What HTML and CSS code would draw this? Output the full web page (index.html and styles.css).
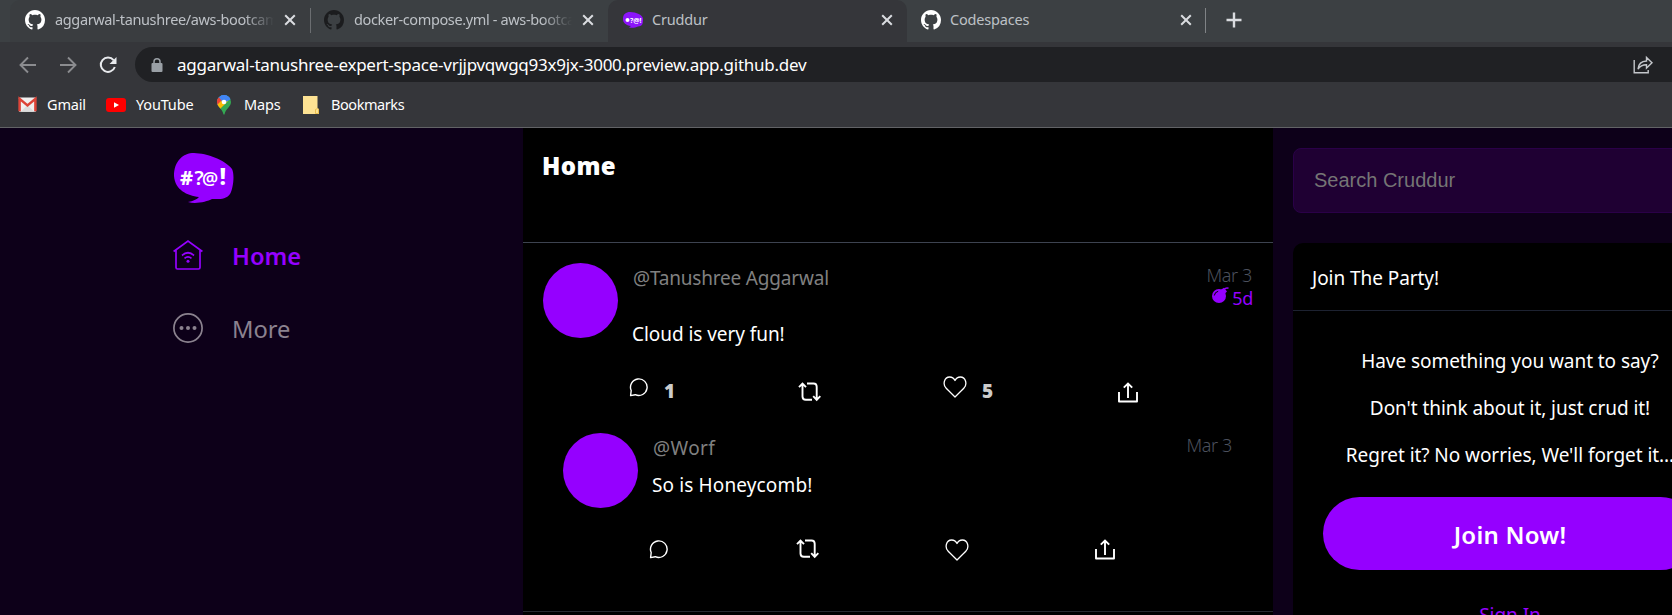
FILE: index.html
```
<!DOCTYPE html>
<html lang="en">
<head>
<meta charset="utf-8">
<title>Cruddur</title>
<link rel="stylesheet" href="styles.css">
</head>
<body>
<svg width="0" height="0" class="defs">
  <symbol id="github" viewBox="0 0 16 16"><path d="M8 0C3.58 0 0 3.58 0 8c0 3.54 2.29 6.53 5.47 7.59.4.07.55-.17.55-.38 0-.19-.01-.82-.01-1.49-2.01.37-2.53-.49-2.69-.94-.09-.23-.48-.94-.82-1.13-.28-.15-.68-.52-.01-.53.63-.01 1.08.58 1.23.82.72 1.21 1.87.87 2.33.66.07-.52.28-.87.51-1.07-1.78-.2-3.64-.89-3.64-3.95 0-.87.31-1.59.82-2.15-.08-.2-.36-1.02.08-2.12 0 0 .67-.21 2.2.82.64-.18 1.32-.27 2-.27s1.36.09 2 .27c1.53-1.04 2.2-.82 2.2-.82.44 1.1.16 1.92.08 2.12.51.56.82 1.27.82 2.15 0 3.07-1.87 3.75-3.65 3.95.29.25.54.73.54 1.48 0 1.07-.01 1.93-.01 2.2 0 .21.15.46.55.38A8.01 8.01 0 0 0 16 8c0-4.42-3.58-8-8-8z"/></symbol>
  <symbol id="close" viewBox="0 0 12 12"><path d="M1.2 1.2l9.6 9.6M10.8 1.2L1.2 10.800" fill="none" stroke="#dadce0" stroke-width="2"/></symbol>
  <symbol id="bubble" viewBox="0 0 60 50"><path d="M20 0C33 .3 51 7 58 16C61 22 59 36 56 41C52 47 44 46 38 46C33 48.500 22 51.500 14 49C19 48 23 46.500 25 44C13 42.500 1 37 0 23C0 8 9 0 20 0z" fill="#9500ff"/></symbol>
  <symbol id="reply" viewBox="0 0 20 20"><path d="M1.600 18.600L2.200 13.500A8.300 8.300 0 1 1 6.300 17.700z" fill="none" stroke="#fff" stroke-width="1.400" stroke-linejoin="round"/></symbol>
  <symbol id="repost" viewBox="0 0 24 20"><path d="M1 5.200L4.500 1.600L8 5.200M4.500 2V14.500Q4.500 17.800 7.800 17.800H14M9 1.500H15.500Q18.700 1.500 18.700 4.800V17M15.200 14.200L18.700 17.800L22.300 14.200" fill="none" stroke="#fff" stroke-width="1.900"/></symbol>
  <symbol id="heart" viewBox="0 0 24 22"><path d="M12 21L3.200 12.300C-.5 8.500 1 1 6.700 1C9.500 1 11 2.500 12 4.500C13 2.500 14.500 1 17.300 1C23 1 24.500 8.500 20.800 12.300z" fill="none" stroke="#fff" stroke-width="1.300" stroke-linejoin="round"/></symbol>
  <symbol id="share" viewBox="0 0 20 21"><path d="M1 10V19.500H19V10" fill="none" stroke="#fff" stroke-width="1.900" stroke-linejoin="round"/><path d="M10 16V2M5.800 5.700L10 1.500L14.200 5.700" fill="none" stroke="#fff" stroke-width="1.900"/></symbol>
</svg>

<header class="browser">
  <div class="tabs">
    <div class="tab tab-first">
      <svg class="fav light"><use href="#github"/></svg>
      <span class="tab-title fade">aggarwal-tanushree/aws-bootcamp</span>
      <svg class="close"><use href="#close"/></svg>
    </div>
    <div class="tab tab-second">
      <svg class="fav dark"><use href="#github"/></svg>
      <span class="tab-title fade">docker-compose.yml - aws-bootcamp</span>
      <svg class="close"><use href="#close"/></svg>
    </div>
    <div class="tab tab-active">
      <svg class="fav" viewBox="0 0 20 20"><path d="M7 2C13 2 20 5 20 9C20 15 19 16 15 16.500C12 18 9 18 6 17.500L8 16C3 15.500 0 13 0 9C0 4 3 2 7 2z" fill="#8c14fb"/><circle cx="4.500" cy="10" r="2" fill="#fff"/><text x="7" y="13" class="fav-text">?@!</text></svg>
      <span class="tab-title">Cruddur</span>
      <svg class="close"><use href="#close"/></svg>
    </div>
    <div class="tab tab-last">
      <svg class="fav light"><use href="#github"/></svg>
      <span class="tab-title">Codespaces</span>
      <svg class="close"><use href="#close"/></svg>
    </div>
    <svg class="plus" viewBox="0 0 16 16"><path d="M8 .5v15M.5 8h15" stroke="#dadce0" stroke-width="2.400"/></svg>
  </div>
  <div class="toolbar">
    <svg class="nav-icon" viewBox="0 0 18 18"><path d="M17 9H2M9 1.500L1.500 9L9 16.500" class="arrow"/></svg>
    <svg class="nav-icon" viewBox="0 0 18 18"><path d="M1 9H16M9 1.500L16.500 9L9 16.500" class="arrow"/></svg>
    <svg class="nav-icon" viewBox="0 0 18 18"><path d="M14.600 4.200A7.200 7.200 0 1 0 15.800 11" fill="none" stroke="#e8eaed" stroke-width="2"/><path d="M17.500 1V8H10.500z" fill="#e8eaed"/></svg>
    <div class="omnibox">
      <svg class="lock" viewBox="0 0 12 14"><rect x="0.500" y="5" width="11" height="9" rx="1" fill="#9aa0a6"/><path d="M3 5.500V3.800a3 3 0 0 1 6 0V5.500" fill="none" stroke="#9aa0a6" stroke-width="1.500"/></svg>
      <span class="url">aggarwal-tanushree-expert-space-vrjjpvqwgq93x9jx-3000.preview.app.github.dev</span>
      <svg class="share-page" viewBox="0 0 20 18"><path d="M1.200 4V16.800H15.200V14M5 13C5.500 8 8 5.200 13.500 5V1.500L19 6.700L13.500 12V8.800C9.500 8.800 7 10 5 13z" fill="none" stroke="#c4c7cb" stroke-width="1.400"/></svg>
    </div>
  </div>
  <div class="bookmarks">
    <div class="bookmark gmail"><svg viewBox="0 0 20 15"><rect x="1" width="18" height="15" rx="1" fill="#f1efef"/><path d="M3 15L10 8L17 15z" fill="#dcdcdc"/><path d="M1.700 14.500V1.500L10 8.500L18.300 1.500V14.500" fill="none" stroke="#dd4337" stroke-width="2.600"/></svg><span>Gmail</span></div>
    <div class="bookmark youtube"><svg viewBox="0 0 20 14"><rect width="20" height="14" rx="3" fill="#f00"/><path d="M8 4.200L13 7L8 9.800z" fill="#fff"/></svg><span>YouTube</span></div>
    <div class="bookmark maps"><svg viewBox="0 0 14 20"><clipPath id="pin"><path d="M7 0A7 7 0 0 1 14 7C14 12 8.500 13.500 7.500 19.500H6.500C5.500 13.500 0 12 0 7A7 7 0 0 1 7 0z"/></clipPath><g clip-path="url(#pin)"><rect width="14" height="20" fill="#34a853"/><path d="M0 0H14V4L7 7L0 14z" fill="#4285f4"/><path d="M0 3L5 7L0 13z" fill="#ea4335"/><path d="M0 0L5 6L0 8z" fill="#ea4335"/><path d="M-1 11L8 2L11 6L2 15z" fill="#fbbc04"/><path d="M4 0H14V4L9 7L5 7L3 2z" fill="#4285f4"/></g><circle cx="7" cy="7" r="2.300" fill="#fff"/></svg><span>Maps</span></div>
    <div class="bookmark notes"><svg viewBox="0 0 16 18"><path d="M0 0H14.500V12L16 13V18H0z" fill="#fde293"/><path d="M12.500 17.500V13.500L14.500 12.500L15.500 13.500V17.500z" fill="#fde293" stroke="#e4b63c" stroke-width=".8"/></svg><span>Bookmarks</span></div>
  </div>
</header>

<div class="app">
  <nav class="sidebar">
    <svg class="logo" viewBox="0 0 60 50"><use href="#bubble"/><text y="32" class="logo-text"><tspan x="6" class="hash">#</tspan><tspan x="20.500">?</tspan><tspan x="28" class="at">@</tspan><tspan x="45.500" y="32" class="bang">!</tspan></text></svg>
    <a class="nav-link active">
      <svg viewBox="0 0 30 30"><path d="M.6 11.500L15 1L29.400 11.500M3 10V27.500Q3 29 4.500 29H25.500Q27 29 27 27.500V10" fill="none" stroke="#9500ff" stroke-width="1.700"/><path d="M9 15.500Q15 10 21 15.500M11.500 18.300Q15 15.500 18.500 18.300" fill="none" stroke="#9500ff" stroke-width="1.700"/><circle cx="15" cy="21.200" r="1.500" fill="#9500ff"/></svg>
      <span>Home</span>
    </a>
    <a class="nav-link">
      <svg viewBox="0 0 30 30"><circle cx="15" cy="15" r="14.100" fill="none" stroke="#8b828f" stroke-width="1.700"/><g fill="#8b828f"><circle cx="8.500" cy="15" r="2"/><circle cx="15" cy="15" r="2"/><circle cx="21.500" cy="15" r="2"/></g></svg>
      <span>More</span>
    </a>
  </nav>

  <main class="feed">
    <h1 class="feed-title">Home</h1>
    <article class="post">
      <div class="post-head">
        <div class="avatar"></div>
        <div class="post-body">
          <div class="handle">@Tanushree Aggarwal</div>
          <p class="message">Cloud is very fun!</p>
        </div>
        <div class="post-meta">
          <div class="date">Mar 3</div>
          <div class="expires"><svg viewBox="0 0 17 16"><circle cx="7" cy="9" r="7" fill="#9500ff"/><path d="M8.500 3L12 .8L15 4.500L12.500 7z" fill="#9500ff"/><path d="M12 2.500Q14 .2 16.500 1.200" fill="none" stroke="#9500ff" stroke-width="1.500"/><path d="M2.300 8.500Q2.800 5 6.200 4.300" fill="none" stroke="#000" stroke-width="1"/></svg><span>5d</span></div>
        </div>
      </div>
      <div class="actions actions-main">
        <div class="action"><svg class="i-reply"><use href="#reply"/></svg><b>1</b></div>
        <div class="action low"><svg class="i-repost"><use href="#repost"/></svg></div>
        <div class="action"><svg class="i-heart"><use href="#heart"/></svg><b>5</b></div>
        <div class="action low"><svg class="i-share"><use href="#share"/></svg></div>
      </div>
    </article>
    <article class="post reply">
      <div class="post-head">
        <div class="avatar"></div>
        <div class="post-body">
          <div class="handle">@Worf</div>
          <p class="message">So is Honeycomb!</p>
        </div>
        <div class="post-meta"><div class="date">Mar 3</div></div>
      </div>
      <div class="actions actions-reply">
        <svg class="i-reply"><use href="#reply"/></svg>
        <svg class="i-repost"><use href="#repost"/></svg>
        <svg class="i-heart"><use href="#heart"/></svg>
        <svg class="i-share"><use href="#share"/></svg>
      </div>
    </article>
  </main>

  <aside class="rail">
    <div class="search">Search Cruddur</div>
    <section class="join">
      <h2 class="join-title">Join The Party!</h2>
      <div class="join-body">
        <p>Have something you want to say?</p>
        <p>Don't think about it, just crud it!</p>
        <p class="last-line">Regret it? No worries, We'll forget it...</p>
        <a class="join-button">Join Now!</a>
        <a class="sign-in">Sign In</a>
      </div>
    </section>
  </aside>
</div>
</body>
</html>
```
FILE: styles.css
```
* { box-sizing: border-box; }
body {
  margin: 0;
  height: 615px;
  overflow: hidden;
  display: flex;
  flex-direction: column;
  background: #0d0019;
  color: #fff;
  font-family: "Noto Sans", "Open Sans", sans-serif;
  font-size: 19px;
  letter-spacing: -0.003em;
}
h1, h2, p { margin: 0; font-weight: 400; }
svg { display: block; flex: none; overflow: visible; }
.defs { position: absolute; }

/* Browser chrome */
.browser { height: 128px; flex: none; background: #35363a; border-bottom: 1px solid #626366; }
.tabs { display: flex; height: 42px; background: #3c4043; }
.tab {
  display: flex;
  align-items: center;
  width: 299px;
  height: 42px;
  padding: 0 14px 2px 15px;
  font-size: 14.5px;
  line-height: 20px;
  color: #bdc1c6;
}
.tab-first { width: 300px; margin-left: 10px; background: #3a3d40; border-radius: 10px 0 0 0; }
.tab-second { width: 298px; padding-left: 14px; background: linear-gradient(#6b6e71, #6b6e71) 0 8px / 1px 25px no-repeat #3c4043; border-radius: 0 0 10px 0; }
.tab-active { width: 299px; background: #35363a; border-radius: 10px 10px 0 0; }
.tab-last { padding-left: 14px; background: linear-gradient(#808386, #808386) 100% 8px / 1px 25px no-repeat; }
.fav { width: 20px; height: 20px; }
.light { fill: #fff; }
.dark { fill: #1b1c1e; }
.fav-text { font: 700 7px "Noto Sans", sans-serif; fill: #fff; letter-spacing: 0; }
.tab-title { flex: 1; margin: -2px 10px 0 9px; overflow: hidden; white-space: nowrap; letter-spacing: -0.012em; }
.fade { margin-left: 10px; letter-spacing: -0.025em; -webkit-mask-image: linear-gradient(90deg, #000 calc(100% - 30px), transparent); mask-image: linear-gradient(90deg, #000 calc(100% - 30px), transparent); }
.close { width: 12px; height: 12px; }
.plus { width: 16px; height: 16px; margin: 12px 0 0 20px; }
.toolbar { display: flex; align-items: center; height: 45px; padding: 5px 0 5px 19px; gap: 22px; }
.nav-icon { width: 18px; height: 18px; }
.arrow { fill: none; stroke: #8b8c8f; stroke-width: 1.900; }
.omnibox {
  display: flex;
  align-items: center;
  flex: 1;
  height: 35px;
  margin-left: -4px;
  padding: 0 19px 0 16px;
  background: #202124;
  border-radius: 18px 0 0 18px;
}
.lock { width: 12px; height: 14px; }
.url { flex: 1; margin-left: 14px; font-size: 17px; line-height: 24px; letter-spacing: -0.0155em; white-space: nowrap; }
.share-page { width: 20px; height: 18px; }
.bookmarks { display: flex; align-items: center; height: 35px; padding-left: 18px; font-size: 14.5px; line-height: 20px; }
.bookmark { display: flex; align-items: center; gap: 10px; letter-spacing: -0.012em; }
.bookmark span { margin-top: -2px; }
.gmail { width: 88px; }
.youtube { width: 111px; }
.maps { width: 86px; gap: 13px; }
.notes { gap: 12px; letter-spacing: -0.03em; }
.gmail svg { width: 19px; height: 15px; }
.youtube svg { width: 20px; height: 14px; }
.maps svg { width: 14px; height: 20px; }
.notes svg { width: 16px; height: 18px; }

/* Page */
.app { display: flex; flex: 1; min-height: 0; }
.sidebar { width: 523px; flex: none; padding: 25px 0 0 173px; }
.logo { width: 60px; height: 50px; margin-left: 1px; }
.logo-text { font: 600 20px "Noto Sans", sans-serif; fill: #fff; letter-spacing: 0; }
.hash { font-size: 20px; font-weight: 800; }
.at { font-size: 18px; font-weight: 600; }
.bang { font-size: 23px; font-weight: 800; }
.nav-link { display: flex; align-items: center; gap: 30px; height: 30px; margin-top: 37px; font-size: 23.7px; line-height: 30px; letter-spacing: 0; color: #8b828f; }
.nav-link + .nav-link { margin-top: 43px; }
.nav-link svg { width: 30px; height: 30px; }
.nav-link span { margin: 1px 0 0 -1px; }
.nav-link.active { color: #9500ff; font-weight: 600; }

.feed { width: 750px; flex: none; background: #000; overflow: hidden; }
.feed-title { height: 115px; padding: 21px 19px; border-bottom: 1px solid #3d4350; font-size: 24px; font-weight: 900; line-height: 34px; letter-spacing: 0.015em; }
.post { padding: 20px 20px 0; }
.post-head { display: flex; height: 93px; }
.avatar { width: 75px; height: 75px; margin-right: 15px; border-radius: 50%; background: #9500ff; }
.post-body { flex: 1; padding-top: 1px; }
.handle { height: 28px; line-height: 28px; letter-spacing: -0.01em; color: #808080; }
.message { height: 28px; margin: 28px 0 0 -1px; line-height: 28px; }
.post-meta { padding-top: 1px; text-align: right; font-size: 18px; line-height: 23px; letter-spacing: -0.02em; }
.date { padding-right: 1px; color: #4b505d; font-weight: 300; }
.expires { display: flex; justify-content: flex-end; gap: 3px; color: #9500ff; }
.expires svg { width: 17px; height: 16px; }
.actions { display: flex; align-items: flex-start; }
.actions b { margin-top: 1px; font-size: 19px; font-weight: 900; line-height: 28px; color: #ccc; }
.actions-main { height: 57px; padding: 20px 0 0 86px; }
.action { display: flex; flex: none; gap: 15px; width: 157px; }
.action:first-child { width: 169px; }
.action:first-child svg { margin-top: 1px; }
.action:nth-child(2) { width: 145px; }
.action:nth-child(3) { width: 175px; }
.low { padding-top: 6px; }
.i-reply { width: 20px; height: 20px; }
.i-repost { width: 24px; height: 20px; }
.i-heart { width: 24px; height: 22px; }
.i-share { width: 20px; height: 21px; }
.reply { padding: 20px 40px 0; height: 199px; border-bottom: 1px solid #272a30; }
.reply .handle { letter-spacing: 0.02em; }
.reply .message { margin-top: 9px; letter-spacing: 0.007em; }
.actions-reply { justify-content: space-between; height: 40px; padding: 13px 118px 0 86px; }
.actions-reply .i-repost { margin: 0 -1px 0 1px; }

.rail { width: 454px; flex: none; padding: 20px 0 0 20px; }
.search { height: 65px; padding: 0 20px; border: 1px solid #2a0048; border-radius: 8px; background: #1f0033; color: #757575; font: 20px/63px "Liberation Sans", Arial, sans-serif; letter-spacing: 0; }
.join { margin-top: 30px; height: 420px; border-radius: 10px; background: #000; }
.join-title { height: 68px; padding: 21px 19px; border-bottom: 1px solid #1d2231; font-size: 19px; line-height: 28px; }
.join-body { padding: 36px 30px; text-align: center; line-height: 28px; white-space: nowrap; }
.join-body p { margin-bottom: 19px; }
.join-body .last-line { margin: 0 -10px 28px; }
.join-button { display: block; height: 73px; border-radius: 37px; background: #9500ff; font-size: 24px; font-weight: 600; line-height: 75px; letter-spacing: 0.01em; }
.sign-in { display: block; margin-top: 31px; color: #9500ff; }
```
